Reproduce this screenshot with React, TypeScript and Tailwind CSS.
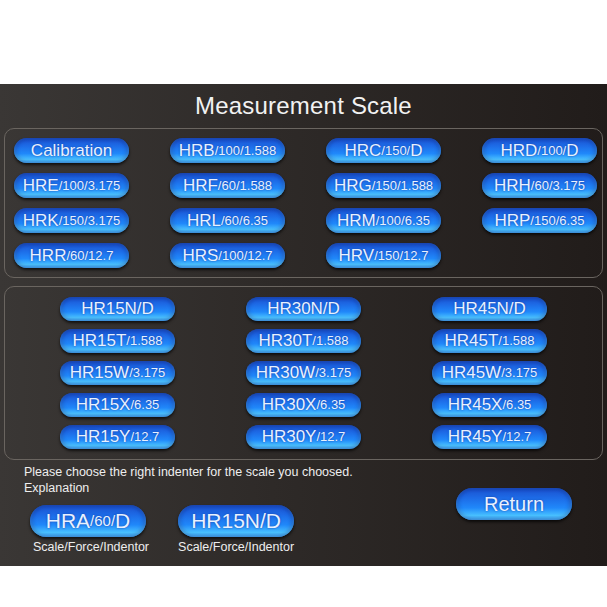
import React from "react";

type Btn = { main: string; sub?: string; tail?: string };

const GROUP_ONE: (Btn | null)[] = [
  { main: "Calibration" },
  { main: "HRB", sub: "/100/1.588" },
  { main: "HRC", sub: "/150/", tail: "D" },
  { main: "HRD", sub: "/100/", tail: "D" },
  { main: "HRE", sub: "/100/3.175" },
  { main: "HRF", sub: "/60/1.588" },
  { main: "HRG", sub: "/150/1.588" },
  { main: "HRH", sub: "/60/3.175" },
  { main: "HRK", sub: "/150/3.175" },
  { main: "HRL", sub: "/60/6.35" },
  { main: "HRM", sub: "/100/6.35" },
  { main: "HRP", sub: "/150/6.35" },
  { main: "HRR", sub: "/60/12.7" },
  { main: "HRS", sub: "/100/12.7" },
  { main: "HRV", sub: "/150/12.7" },
  null,
];

const SUPERFICIAL_ROWS: { letter: string; sub?: string }[] = [
  { letter: "N/D" },
  { letter: "T", sub: "/1.588" },
  { letter: "W", sub: "/3.175" },
  { letter: "X", sub: "/6.35" },
  { letter: "Y", sub: "/12.7" },
];

const GROUP_TWO: Btn[] = SUPERFICIAL_ROWS.flatMap((r) =>
  ["HR15", "HR30", "HR45"].map((s) => ({ main: s + r.letter, sub: r.sub }))
);

const pill =
  "flex items-center justify-center rounded-full text-[#e8f1ff] whitespace-nowrap " +
  "bg-[linear-gradient(180deg,#1b50cc_0%,#1d6ae6_30%,#2088fa_62%,#48c0ff_86%,#2f92f0_100%)] " +
  "shadow-[0_2px_3px_rgba(0,0,0,0.7),inset_0_-2px_4px_rgba(120,225,255,0.4),inset_2px_0_4px_rgba(10,30,120,0.45),inset_-2px_0_4px_rgba(10,30,120,0.45)] " +
  "[text-shadow:0_0_2px_rgba(20,60,160,0.9)]";

function ScaleButton({ btn, size = "md" }: { btn: Btn; size?: "md" | "lg" }) {
  const big = size === "lg";
  return (
    <div className={`${pill} ${big ? "w-[116px] h-[32px]" : "w-[115px] h-full"}`}>
      <span className={big ? "text-[21px]" : "text-[17px]"}>{btn.main}</span>
      {btn.sub && <span className={big ? "text-[15px]" : "text-[13px]"}>{btn.sub}</span>}
      {btn.tail && <span className={big ? "text-[21px]" : "text-[17px]"}>{btn.tail}</span>}
    </div>
  );
}

export default function App() {
  return (
    <div className="w-[607px] h-[607px] bg-white font-['Liberation_Sans',Arial,sans-serif]">
      <div className="h-[84px]" />
      <div className="h-[482px] flex flex-col bg-[linear-gradient(90deg,#3a3735_0%,#2e2a28_45%,#211c1a_100%)]">
        <div className="h-[44px] flex items-center justify-center text-[24px] text-[#f2f2f2] tracking-[0.2px]">
          Measurement Scale
        </div>

        <div className="mx-[4px] h-[150px] rounded-[10px] border border-[#6a6560] pt-[9px] pl-[9px]">
          <div className="grid grid-cols-[repeat(4,115px)] grid-rows-[repeat(4,25px)] gap-x-[41px] gap-y-[10px]">
            {GROUP_ONE.map((b, i) => (b ? <ScaleButton key={i} btn={b} /> : <div key={i} />))}
          </div>
        </div>

        <div className="mx-[4px] mt-[8px] h-[174px] rounded-[10px] border border-[#6a6560] pt-[10px] pl-[55px]">
          <div className="grid grid-cols-[repeat(3,115px)] grid-rows-[repeat(5,24px)] gap-x-[71px] gap-y-[8px]">
            {GROUP_TWO.map((b, i) => (
              <ScaleButton key={i} btn={b} />
            ))}
          </div>
        </div>

        <div className="flex flex-1">
          <div className="pl-[24px] pt-[4px] flex flex-col text-[#eeeeee]">
            <div className="text-[12.5px] leading-[16px]">
              Please choose the right indenter for the scale you choosed.
            </div>
            <div className="text-[12.5px] leading-[16px]">Explanation</div>
            <div className="flex gap-[29px] ml-[3px] mt-[9px]">
              <div className="flex flex-col items-center">
                <ScaleButton btn={{ main: "HRA", sub: "/60/", tail: "D" }} size="lg" />
                <div className="text-[12.5px] leading-[16px] mt-[2px] ml-[6px]">Scale/Force/Indentor</div>
              </div>
              <div className="flex flex-col items-center">
                <ScaleButton btn={{ main: "HR15N/D" }} size="lg" />
                <div className="text-[12.5px] leading-[16px] mt-[2px]">Scale/Force/Indentor</div>
              </div>
            </div>
          </div>
          <div className="ml-auto mr-[35px] mt-[28px]">
            <div className={`${pill} w-[116px] h-[32px] text-[20px]`}>Return</div>
          </div>
        </div>
      </div>
    </div>
  );
}
